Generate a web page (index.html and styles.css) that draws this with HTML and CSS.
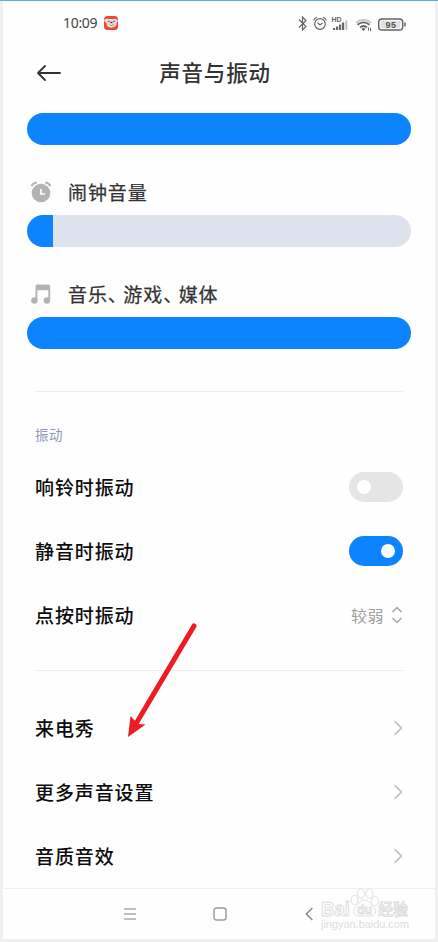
FILE: index.html
```html
<!DOCTYPE html>
<html lang="zh-CN">
<head>
<meta charset="utf-8">
<title>声音与振动</title>
<link rel="stylesheet" href="styles.css">
</head>
<body>
<div class="phone">
  <header class="status">
    <span class="time">10:09</span>
    <svg class="app" width="16" height="16" viewBox="0 0 16 16"><rect x="1" y="1" width="14" height="14" rx="3.5" fill="#f04432"/><path d="M1 5Q3 2.500 6 4L10 4Q14 3 15 6Q13 8 13 11Q8 14.500 4 11L3.500 8Q1 7 1 5Z" fill="#e5dcd5"/><circle cx="6" cy="6.500" r=".7" fill="#333"/><ellipse cx="8.500" cy="7.500" rx="1.200" ry=".8" fill="#333"/><circle cx="11" cy="6.300" r=".7" fill="#333"/><path d="M6.500 10Q9 11.500 11 9.500" fill="none" stroke="#a99a94"/></svg>
    <span class="grow"></span>
    <svg class="indicators" width="112" height="20" viewBox="0 0 112 20" fill="none" stroke="#666" stroke-width="1.200">
      <path d="M3 6.500L10 13.500L6.500 17V4L10 7.500L3 14.500"/>
      <circle cx="24" cy="11" r="5.300"/><path d="M21.500 9.800L24 12L26.500 10M17.700 7.300Q18.500 5 21 4.200M27 4.200Q29.500 5 30.300 7.300"/>
      <g stroke="none" fill="#666"><path d="M37 15h2.200v2h-2.200zM40 13.500h2.200v3.500h-2.200zM43 11.500h2.200v5.500h-2.200zM46 9.500h2.200v7.500h-2.200z"/><path d="M49.500 7.500h1.700v9.500h-1.700z" fill="#bbb"/></g>
      <path d="M60 9.800Q67.500 4 75 9.800" stroke="#ccc" stroke-width="2"/><path d="M61.500 11.800Q67.500 7 73.500 11.800M64 14.500Q67.500 11.500 71 14.500" stroke-width="1.800"/><path d="M67.500 14.500L69.500 16L67.500 18L65.500 16Z" fill="#666" stroke="none"/><path d="M72.500 14.500v3M74.500 15v3" stroke-width="1"/>
      <rect x="82.700" y="6" width="24" height="11" rx="3.300" fill="#fff" stroke-width="1.500"/><rect x="84.500" y="7.700" width="20" height="7.600" rx="1.500" fill="#e2e2e2" stroke="none"/><path d="M109 9.500v4" stroke-width="1.500"/>
      <text class="hd" x="35.500" y="8.500">HD</text><text class="charge" x="89.500" y="14.800">95</text>
    </svg>
  </header>

  <div class="titlebar">
    <svg class="back" width="26" height="20" viewBox="0 0 26 20"><path d="M9 3L2 10L9 17M2 10H24" fill="none" stroke="#333" stroke-width="1.800" stroke-linecap="round" stroke-linejoin="round"/></svg>
    <h1>声音与振动</h1>
  </div>

  <section class="volumes">
    <div class="slider full"></div>
    <div class="label">
      <svg width="22" height="22" viewBox="0 0 22 22"><circle cx="11" cy="12" r="9.300" fill="#b3b3b3"/><path d="M1.500 5.200Q3 2 6.700 1.500M15.300 1.500Q19 2 20.500 5.200" fill="none" stroke="#b3b3b3" stroke-width="2"/><path d="M11 8V13H15" fill="none" stroke="#fff" stroke-width="1.700"/></svg>
      <span>闹钟音量</span>
    </div>
    <div class="slider low"></div>
    <div class="label">
      <svg width="22" height="22" viewBox="0 0 22 22" fill="#b3b3b3"><path d="M5.500 3.500Q5.500 1.500 7.500 1.500H18Q20.200 1.500 20.200 3.500V17.500H18.300V7.300H7.400V17.500H5.500Z"/><circle cx="4.400" cy="17.500" r="3.200"/><circle cx="16.900" cy="17.500" r="3.200"/></svg>
      <span>音乐<i>、</i>游戏<i>、</i>媒体</span>
    </div>
    <div class="slider full"></div>
  </section>

  <section class="group vibration">
    <h2>振动</h2>
    <div class="row"><span>响铃时振动</span><div class="toggle"></div></div>
    <div class="row"><span>静音时振动</span><div class="toggle on"></div></div>
    <div class="row"><span>点按时振动</span><div class="value">较弱<svg width="12" height="18" viewBox="0 0 12 18"><path d="M1.500 6L6 1.500L10.500 6M1.500 12L6 16.500L10.500 12" fill="none" stroke="#a6a6a6" stroke-width="1.500"/></svg></div></div>
  </section>

  <section class="group more">
    <div class="row"><span>来电秀</span><svg class="chevron" width="10" height="16" viewBox="0 0 10 16"><path d="M1.500 1L8.500 8L1.500 15"/></svg></div>
    <div class="row"><span>更多声音设置</span><svg class="chevron" width="10" height="16" viewBox="0 0 10 16"><path d="M1.500 1L8.500 8L1.500 15"/></svg></div>
    <div class="row"><span>音质音效</span><svg class="chevron" width="10" height="16" viewBox="0 0 10 16"><path d="M1.500 1L8.500 8L1.500 15"/></svg></div>
  </section>

  <nav class="nav">
    <svg width="14" height="14" viewBox="0 0 14 14"><path d="M1 2H13M1 7H13M1 12H13" stroke="#aaa" stroke-width="1.500"/></svg>
    <svg width="14" height="14" viewBox="0 0 14 14"><rect x="1" y="1" width="12" height="12" rx="2.500" fill="none" stroke="#999" stroke-width="1.400"/></svg>
    <svg width="14" height="14" viewBox="0 0 14 14"><path d="M10.300 1L4.300 7L10.300 13" fill="none" stroke="#888" stroke-width="1.500"/></svg>
  </nav>
</div>

<svg class="arrow" width="72" height="120" viewBox="0 0 72 120"><path d="M68 6L11 102" stroke="#ed1c24" stroke-width="5" stroke-linecap="round"/><path d="M2 117L4.500 96L10 102L13 104L19.500 104.500Z" fill="#ed1c24"/></svg>

<svg class="watermark" width="96" height="48" viewBox="0 0 96 48">
  <g fill="#fff" stroke="#d9d9d9" stroke-width=".9">
    <ellipse cx="36.500" cy="13" rx="3.500" ry="4.800"/><ellipse cx="43" cy="6.500" rx="3.500" ry="4.800"/><ellipse cx="51.500" cy="6.500" rx="3.500" ry="4.800"/><ellipse cx="57" cy="14" rx="3.500" ry="4.800"/>
    <path d="M47 13C51 13 52 17 55.500 20C59.500 24 57.500 29 52.500 29H40.500C35.500 29 34 24 37.500 20C41 17 42 13 47 13Z"/>
    <text class="bai" x="3" y="28.500" textLength="29" lengthAdjust="spacingAndGlyphs">Bai</text>
    <text class="du" x="39" y="27" textLength="15" lengthAdjust="spacingAndGlyphs">du</text>
    <text class="jy" x="60" y="28" textLength="30" lengthAdjust="spacingAndGlyphs">经验</text>
  </g>
  <text class="url" x="3" y="41" textLength="88" lengthAdjust="spacingAndGlyphs">jingyan.baidu.com</text>
</svg>
</body>
</html>
```
FILE: styles.css
```css
* { box-sizing: border-box; }
body {
  position: relative;
  margin: 0;
  width: 438px;
  height: 942px;
  overflow: hidden;
  background: #f0f0f0;
  border-top: 1px solid #56aee3;
  font-family: "Noto Sans CJK SC", sans-serif;
  color: #0c0c0c;
}
svg { display: block; flex: none; }
.phone {
  display: flex;
  flex-direction: column;
  width: 432px;
  height: 938px;
  margin-left: 3px;
  background: #fefefe;
}
.status {
  display: flex;
  align-items: center;
  height: 44px;
  padding: 0 27px 0 60px;
}
.time {
  width: 36px;
  margin-right: 4px;
  font: 400 14px/20px "Noto Sans", sans-serif;
  letter-spacing: -.3px;
  color: #444;
}
.grow { flex: 1; }
.hd { font: 700 7px "Liberation Sans", sans-serif; fill: #666; stroke: none; }
.charge { font: 700 9px "Liberation Sans", sans-serif; letter-spacing: .4px; fill: #555; stroke: none; }
.titlebar {
  display: grid;
  grid-template-columns: 60px 1fr 68px;
  align-items: center;
  height: 56px;
}
.back { margin-left: 33px; }
h1 {
  margin: 0;
  padding-bottom: 2px;
  text-align: center;
  font-size: 21.500px;
  font-weight: 500;
  letter-spacing: .8px;
  line-height: 32px;
  color: #333;
}
.volumes { padding: 12px 24px 42px; }
.slider { height: 32px; border-radius: 16px; background: #0d84ff; }
.slider.low { background: linear-gradient(to right, #0d84ff 26px, #dde2ec 26px); }
.label {
  display: flex;
  align-items: center;
  gap: 16px;
  height: 70px;
  padding: 25px 0 0 3px;
  font-size: 19px;
  line-height: 28px;
  letter-spacing: .9px;
  color: #333;
  -webkit-text-stroke: .25px #333;
}
.label span { white-space: nowrap; }
.label i { font-style: normal; font-feature-settings: "halt"; letter-spacing: 6px; }
.group { margin: 0 32px; border-top: 1px solid #ececec; }
.vibration { height: 280px; padding-top: 32px; }
h2 {
  margin: 0 0 11px;
  font-size: 13.500px;
  font-weight: 400;
  letter-spacing: .6px;
  line-height: 20px;
  color: #939bbb;
}
.row {
  display: flex;
  align-items: center;
  justify-content: space-between;
  height: 64px;
  font-size: 19px;
  font-weight: 500;
  letter-spacing: .9px;
}
.toggle {
  width: 54px;
  height: 30px;
  padding: 8px;
  border-radius: 15px;
  background: #e5e5e5;
}
.toggle::before {
  content: "";
  display: block;
  width: 14px;
  height: 14px;
  border-radius: 50%;
  background: #fff;
}
.toggle.on { background: #0d84ff; }
.toggle.on::before { margin-left: auto; }
.value {
  display: flex;
  align-items: center;
  gap: 7px;
  font-size: 16px;
  font-weight: 400;
  letter-spacing: .5px;
  color: #a0a0a0;
}
.row span { padding-bottom: 1px; }
.more { padding-top: 25px; }
.chevron path { fill: none; stroke: #bdbdbd; stroke-width: 1.500; }
.nav {
  display: flex;
  justify-content: space-between;
  align-items: center;
  height: 51px;
  margin-top: auto;
  padding: 0 119px 0 120px;
  border-top: 1px solid #f0f0f0;
}
.arrow { position: absolute; left: 126px; top: 619px; }
.watermark { position: absolute; left: 318px; top: 886px; opacity: .9; }
.bai { font: 700 20px "Liberation Sans", sans-serif; }
.du { font: 700 12px "Liberation Sans", sans-serif; }
.jy { font: 500 16px "Noto Sans CJK SC", sans-serif; }
.url { font: 400 10px "Liberation Sans", sans-serif; fill: #dcdcdc; }
```
